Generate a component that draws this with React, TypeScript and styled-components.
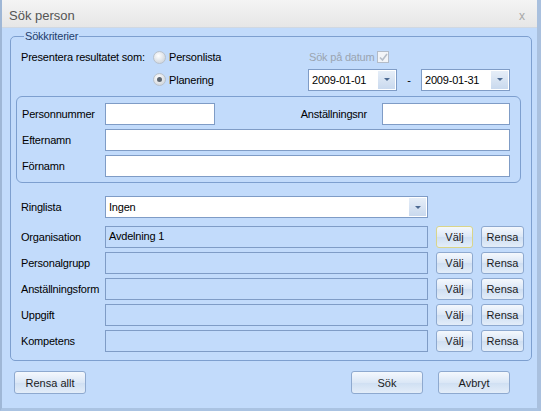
import * as React from 'react';
import styled, {createGlobalStyle} from 'styled-components';

const Global = createGlobalStyle`
  html, body {
    margin: 0;
    padding: 0;
    background: #c5dcf8;
  }
  * {
    box-sizing: border-box;
  }
`;

const Window = styled.div`
  width: 541px;
  height: 411px;
  display: flex;
  flex-direction: column;
  background: #c2dbfb;
  border-left: 2px solid #9fb7d6;
  border-right: 4px solid #a9c0de;
  border-bottom: 3px solid #aac3e2;
  font-family: "Liberation Sans", Arial, sans-serif;
  font-size: 11px;
  letter-spacing: -0.2px;
  color: #000;
  overflow: hidden;
`;

const TitleBar = styled.div`
  height: 28px;
  flex: none;
  display: flex;
  align-items: center;
  justify-content: space-between;
  padding: 4px 12px 0 7px;
  background: linear-gradient(#f4f4f4, #e6e6e6);
  border-bottom: 1px solid #d0d8e2;
  color: #555;
  font-size: 13px;
  letter-spacing: 0;
`;

const Close = styled.span`
  color: #a7a7a7;
  font-size: 12px;
`;

const Body = styled.div`
  flex: 1;
  display: flex;
  flex-direction: column;
  padding: 2px 5px 0 8px;
`;

const Group = styled.fieldset`
  margin: 0;
  padding: 0 6px 8px 10px;
  border: 1px solid #7d9fcf;
  border-radius: 5px;
  min-width: 0;
`;

const Legend = styled.legend`
  padding: 0 1px;
  margin-left: 3px;
  color: #1e3d6b;
  font-size: 11px;
`;

const TopGrid = styled.div`
  display: grid;
  grid-template-columns: 132px 153px 1fr;
  grid-template-rows: 18px 27px;
  align-items: center;
  padding-top: 6px;
`;

const Label = styled.span<{$disabled?: boolean}>`
  white-space: nowrap;
  color: ${p => (p.$disabled ? '#9aa4b0' : '#000')};
`;

const RadioRow = styled.label`
  display: flex;
  align-items: center;
  gap: 3px;
`;

const RadioDot = styled.span<{$checked?: boolean}>`
  width: 13px;
  height: 13px;
  border-radius: 50%;
  border: 1px solid #b9c2cc;
  background: radial-gradient(circle at 40% 35%, #ffffff, #d6dbe1 70%);
  display: flex;
  align-items: center;
  justify-content: center;
  &::after {
    content: '';
    display: ${p => (p.$checked ? 'block' : 'none')};
    width: 5px;
    height: 5px;
    border-radius: 50%;
    background: #5b6570;
  }
`;

const DateCheck = styled.div`
  display: flex;
  align-items: center;
  gap: 3px;
  padding-left: 3px;
`;

const CheckBox = styled.span`
  width: 12px;
  height: 12px;
  border: 1px solid #b3bcc8;
  background: #f3f5f8;
  display: flex;
  align-items: center;
  justify-content: center;
`;

const DateRow = styled.div`
  display: flex;
  align-items: center;
  padding-left: 2px;
`;

const Dash = styled.span`
  width: 24px;
  text-align: center;
`;

const Combo = styled.div<{$width: number}>`
  width: ${p => p.$width}px;
  height: 22px;
  flex: none;
  display: flex;
  align-items: stretch;
  background: #fff;
  border: 1px solid #7f9cc6;
`;

const ComboText = styled.span`
  flex: 1;
  display: flex;
  align-items: center;
  padding-left: 3px;
`;

const ComboButton = styled.span`
  width: 17px;
  margin: 1px;
  display: flex;
  align-items: center;
  justify-content: center;
  background: linear-gradient(#e6eef8, #c9d9ee);
  &::after {
    content: '';
    border-left: 3px solid transparent;
    border-right: 3px solid transparent;
    border-top: 3px solid #4d6a92;
  }
`;

const InnerGroup = styled.div`
  margin: 3px 4px 0 -5px;
  border: 1px solid #7d9fcf;
  border-radius: 6px;
  padding: 6px 10px 5px 5px;
  display: grid;
  grid-template-columns: 83px 110px 1fr 128px;
  grid-auto-rows: 22px;
  row-gap: 4px;
  align-items: center;
`;

const TextField = styled.div<{$span?: number; $disabled?: boolean; $width?: number}>`
  grid-column: ${p => (p.$span ? `span ${p.$span}` : 'auto')};
  width: ${p => (p.$width ? `${p.$width}px` : 'auto')};
  flex: none;
  height: 22px;
  display: flex;
  align-items: center;
  padding: 0 0 3px 3px;
  background: ${p => (p.$disabled ? '#c2dbfb' : '#fff')};
  border: 1px solid #7f9cc6;
`;

const RightLabel = styled.span`
  justify-self: end;
  padding-right: 15px;
  white-space: nowrap;
`;

const Rows = styled.div`
  margin-top: 13px;
  display: flex;
  flex-direction: column;
  gap: 4px;
`;

const Row = styled.div<{$after?: number}>`
  height: 22px;
  display: flex;
  align-items: center;
  margin-bottom: ${p => p.$after || 0}px;
`;

const RowLabel = styled.span`
  width: 84px;
  flex: none;
  white-space: nowrap;
`;

const buttonLook = `
  padding: 0;
  font-family: inherit;
  font-size: 11px;
  color: #1b1b1b;
  border-radius: 3px;
  background: linear-gradient(#f4f8fd, #dbe7f6 50%, #cfdff2 51%, #e3edf9);
`;

const SmallButton = styled.button<{$hot?: boolean; $width: number}>`
  ${buttonLook}
  width: ${p => p.$width}px;
  height: 22px;
  margin-left: 8px;
  flex: none;
  border: 1px solid ${p => (p.$hot ? '#d9d58a' : '#8ea9cf')};
`;

const Footer = styled.div`
  display: flex;
  align-items: center;
  padding: 10px 0 0 4px;
`;

const BigButton = styled.button<{$gap?: number}>`
  ${buttonLook}
  width: 72px;
  height: 23px;
  margin-left: ${p => p.$gap || 0}px;
  border: 1px solid #8ea9cf;
`;

const pickRows = [
  {label: 'Organisation', value: 'Avdelning 1'},
  {label: 'Personalgrupp', value: ''},
  {label: 'Anställningsform', value: ''},
  {label: 'Uppgift', value: ''},
  {label: 'Kompetens', value: ''},
];

export default function App() {
  return (
    <Window>
      <Global/>
      <TitleBar>
        <span>Sök person</span>
        <Close>x</Close>
      </TitleBar>
      <Body>
        <Group>
          <Legend>Sökkriterier</Legend>
          <TopGrid>
            <Label>Presentera resultatet som:</Label>
            <RadioRow><RadioDot/>Personlista</RadioRow>
            <DateCheck>
              <Label $disabled>Sök på datum</Label>
              <CheckBox>
                <svg width='9' height='9' viewBox='0 0 9 9'>
                  <path d='M1 4.5 L3.5 7 L8 1' stroke='#b6bec9' strokeWidth='1.6' fill='none'/>
                </svg>
              </CheckBox>
            </DateCheck>
            <span/>
            <RadioRow><RadioDot $checked/>Planering</RadioRow>
            <DateRow>
              <Combo $width={89}><ComboText>2009-01-01</ComboText><ComboButton/></Combo>
              <Dash>-</Dash>
              <Combo $width={89}><ComboText>2009-01-31</ComboText><ComboButton/></Combo>
            </DateRow>
          </TopGrid>

          <InnerGroup>
            <Label>Personnummer</Label>
            <TextField/>
            <RightLabel>Anställningsnr</RightLabel>
            <TextField/>
            <Label>Efternamn</Label>
            <TextField $span={3}/>
            <Label>Förnamn</Label>
            <TextField $span={3}/>
          </InnerGroup>

          <Rows>
            <Row $after={4}>
              <RowLabel>Ringlista</RowLabel>
              <Combo $width={323}><ComboText>Ingen</ComboText><ComboButton/></Combo>
            </Row>
            {pickRows.map((r, i) => (
              <Row key={r.label}>
                <RowLabel>{r.label}</RowLabel>
                <TextField $disabled $width={323}>{r.value}</TextField>
                <SmallButton $hot={i === 0} $width={37}>Välj</SmallButton>
                <SmallButton $width={43}>Rensa</SmallButton>
              </Row>
            ))}
          </Rows>
        </Group>
        <Footer>
          <BigButton>Rensa allt</BigButton>
          <BigButton $gap={265}>Sök</BigButton>
          <BigButton $gap={15}>Avbryt</BigButton>
        </Footer>
      </Body>
    </Window>
  );
}
